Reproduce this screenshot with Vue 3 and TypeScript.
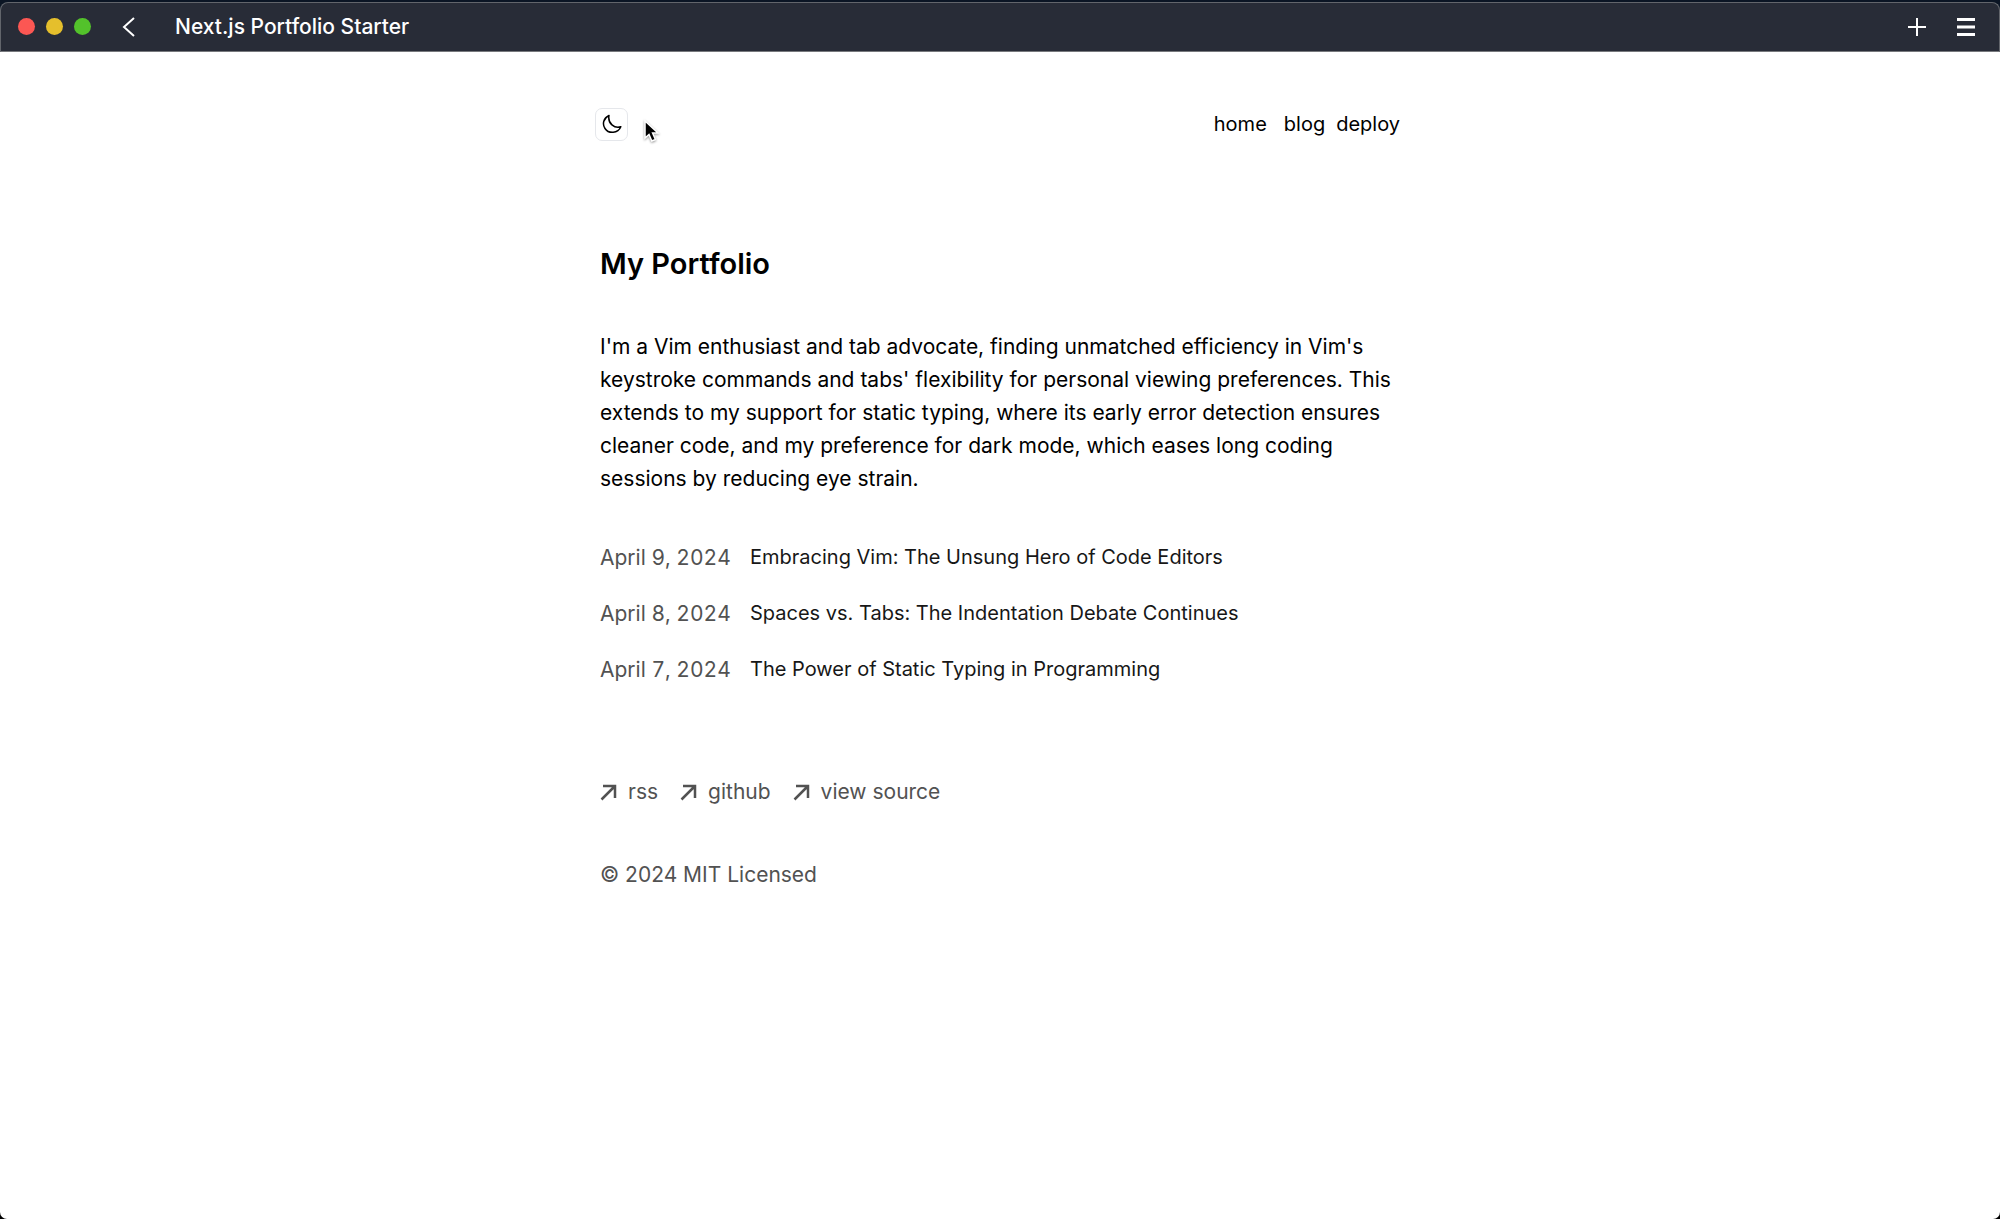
<script setup lang="ts">
interface NavItem { label: string; href: string }
interface Post { date: string; title: string; href: string }

const nav: NavItem[] = [
  { label: 'home', href: '#home' },
  { label: 'blog', href: '#blog' },
  { label: 'deploy', href: '#deploy' },
]

const posts: Post[] = [
  { date: 'April 9, 2024', title: 'Embracing Vim: The Unsung Hero of Code Editors', href: '#vim' },
  { date: 'April 8, 2024', title: 'Spaces vs. Tabs: The Indentation Debate Continues', href: '#spaces-vs-tabs' },
  { date: 'April 7, 2024', title: 'The Power of Static Typing in Programming', href: '#static-typing' },
]

const links: NavItem[] = [
  { label: 'rss', href: '#rss' },
  { label: 'github', href: '#github' },
  { label: 'view source', href: '#source' },
]
</script>

<template>
  <div class="window">
    <header class="titlebar">
      <div class="lights">
        <button class="light red" aria-label="Close"></button>
        <button class="light yellow" aria-label="Minimize"></button>
        <button class="light green" aria-label="Zoom"></button>
      </div>
      <button class="tool back" aria-label="Back">
        <svg width="14" height="20" viewBox="0 0 14 20"><path d="M12 1 2 10l10 9" /></svg>
      </button>
      <span class="window-title">Next.js Portfolio Starter</span>
      <div class="tools">
        <button class="tool" aria-label="New tab">
          <svg width="20" height="20" viewBox="0 0 20 20"><path d="M10 1v18M1 10h18" /></svg>
        </button>
        <button class="tool" aria-label="Menu">
          <svg class="menu" width="18" height="20" viewBox="0 0 18 20"><path d="M0 2.500h18M0 10h18M0 17.500h18" /></svg>
        </button>
      </div>
    </header>

    <div class="page">
      <div class="top">
        <button class="theme" aria-label="Toggle theme">
          <svg width="20" height="20" viewBox="0 0 20 20">
            <path d="M7 1.500C1.500 4 0 10 3 14.500C6.500 20 16 19.800 18.800 12.800C12.500 14.800 5.500 9.500 7 1.500Z" />
          </svg>
        </button>
        <nav class="nav">
          <a v-for="item in nav" :key="item.label" :href="item.href">{{ item.label }}</a>
        </nav>
        <svg class="cursor" width="16" height="24" viewBox="0 0 16 24">
          <path d="M1 1v17l4-3.500 2.800 6.500 3.600-1.500-2.800-6.500h5.400Z" />
        </svg>
      </div>

      <main>
        <h1>My Portfolio</h1>
        <p class="intro">
          I'm a Vim enthusiast and tab advocate, finding unmatched efficiency in Vim's keystroke
          commands and tabs' flexibility for personal viewing preferences. This extends to my
          support for static typing, where its early error detection ensures cleaner code, and my
          preference for dark mode, which eases long coding sessions by reducing eye strain.
        </p>
        <ul class="posts">
          <li v-for="post in posts" :key="post.title">
            <time>{{ post.date }}</time>
            <a :href="post.href">{{ post.title }}</a>
          </li>
        </ul>
      </main>

      <footer>
        <div class="links">
          <a v-for="link in links" :key="link.label" :href="link.href">
            <svg width="17" height="19" viewBox="0 0 17 19"><path d="M1.500 17.500 14.500 4.500M3 4h12v12" /></svg>
            <span>{{ link.label }}</span>
          </a>
        </div>
        <p class="license">© 2024 MIT Licensed</p>
      </footer>
    </div>
  </div>
</template>

<style>
html,
body,
#app {
  height: 100%;
}
body {
  margin: 0;
  background: #000;
}
</style>

<style scoped>
.window {
  box-sizing: border-box;
  min-height: 100%;
  border-top: 2px solid #0b1524;
  border-radius: 0 0 7px 7px;
  overflow: hidden;
  background: #fff;
  color: #000;
  font-family: Inter, "Liberation Sans", sans-serif;
  font-size: 21px;
  line-height: 33px;
}
a {
  color: inherit;
  text-decoration: none;
}
button {
  padding: 0;
  border: 0;
  background: none;
}
svg {
  display: block;
  fill: none;
}
.titlebar {
  box-sizing: border-box;
  display: flex;
  align-items: center;
  height: 50px;
  padding: 0 24px 1px 17px;
  border: 1px solid #62656b;
  border-bottom-color: #77797d;
  border-radius: 8px 8px 0 0;
  background: #282c37;
  box-shadow: 0 -8px 0 #0b1524;
  color: #fff;
}
.lights {
  display: flex;
  gap: 11px;
}
.light {
  width: 17px;
  height: 17px;
  border-radius: 50%;
}
.red { background: #fc5753; }
.yellow { background: #e5bf2c; }
.green { background: #53c22b; }
.tool svg {
  stroke: #fff;
  stroke-width: 2;
}
.tool .menu {
  stroke-width: 3;
}
.back {
  margin: 0 39px 0 31px;
}
.window-title {
  font-weight: 500;
}
.tools {
  display: flex;
  gap: 30px;
  margin-left: auto;
}
.page {
  max-width: 800px;
  margin: 0 auto;
  padding: 55px 24px 0;
}
.top {
  position: relative;
  display: flex;
  align-items: center;
  justify-content: space-between;
  margin-left: -5px;
}
.theme {
  box-sizing: border-box;
  display: grid;
  place-items: center;
  width: 33px;
  height: 33px;
  border: 1px solid #e5e7eb;
  border-radius: 7px;
}
.theme svg {
  stroke: #000;
  stroke-width: 1.5;
  stroke-linejoin: round;
}
.cursor {
  position: absolute;
  top: 13px;
  left: 49px;
  overflow: visible;
  fill: #000;
  stroke: #fff;
  stroke-width: 1.5;
  filter: drop-shadow(0 1px 1px #0006);
}
.nav {
  display: flex;
  gap: 11px;
  padding-top: 1px;
  font-size: 20px;
}
.nav a:first-child {
  margin-right: 6px;
}
h1 {
  margin: 101px 0 44px;
  font-size: 29px;
  font-weight: 600;
  line-height: 44px;
}
.intro {
  margin: 0;
}
.posts {
  display: flex;
  flex-direction: column;
  gap: 23px;
  margin: 46px 0 0;
  padding: 0;
  list-style: none;
}
.posts li {
  display: flex;
}
time {
  flex: none;
  width: 150px;
  color: #525252;
  font-variant-numeric: tabular-nums;
}
.posts a {
  color: #171717;
  font-size: 20px;
}
footer {
  margin-top: 89px;
  color: #525252;
}
.links {
  display: flex;
  gap: 22px;
}
.links a {
  display: flex;
  align-items: center;
  gap: 11px;
}
.links svg {
  stroke: #525252;
  stroke-width: 2.5;
}
.license {
  margin: 50px 0 0;
}
</style>
